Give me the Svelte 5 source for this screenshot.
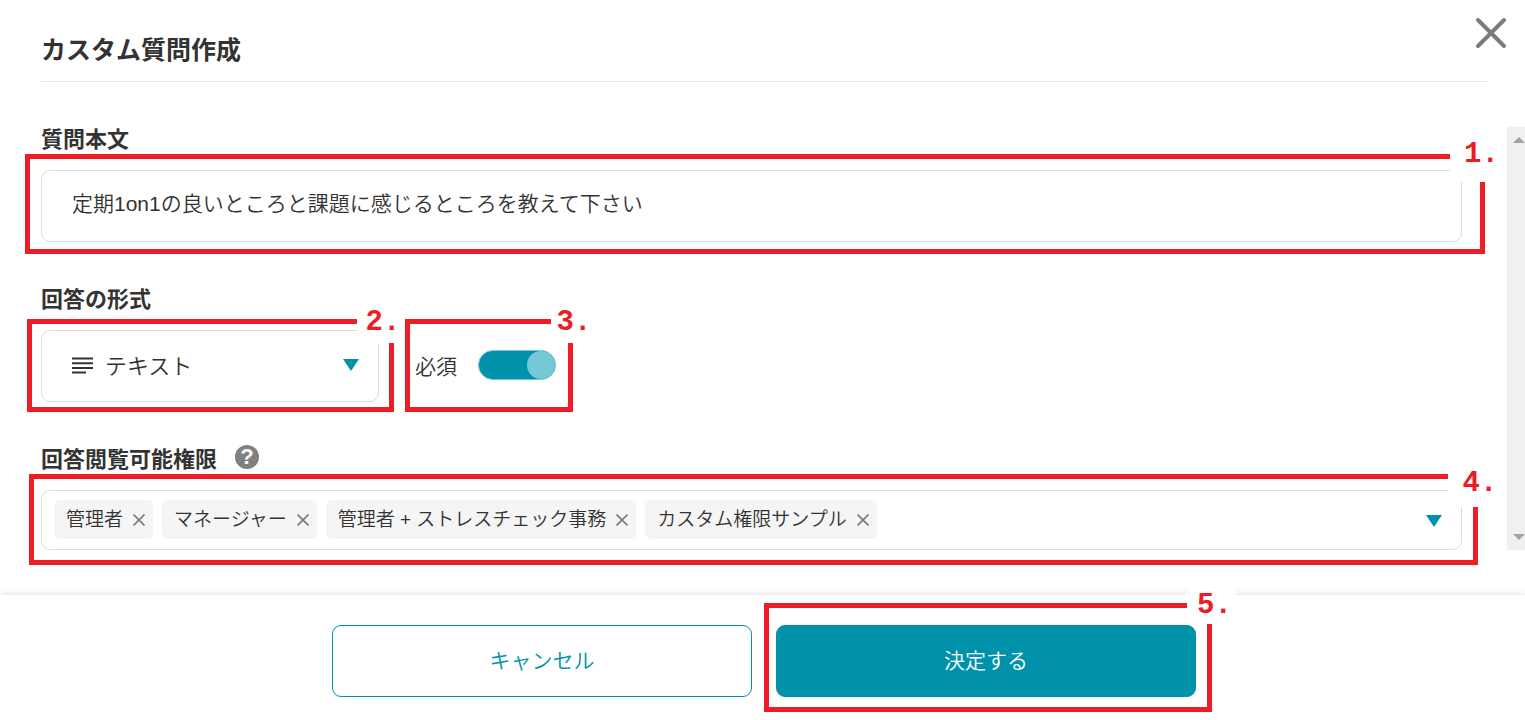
<script lang="ts">

    let question = $state('定期1on1の良いところと課題に感じるところを教えて下さい')
    let format = $state('text')
    let required = $state(true)

    // Roles that can read the answers
    let roles = $state([
        '管理者',
        'マネージャー',
        '管理者 + ストレスチェック事務',
        'カスタム権限サンプル'
    ])

    function removeRole(role) {
        roles = roles.filter((r) => r !== role)
    }

</script>

<!-- Numbered frame around a step -->
{#snippet mark(step)}
    <span class="mark mark-{step}"><b class="mark-number">{step}.</b></span>
{/snippet}

<main class="dialog">

    <header class="header">
        <h1 class="title">カスタム質問作成</h1>
        <button class="close" type="button" aria-label="閉じる">
            <svg viewBox="0 0 32 32" width="32" height="32">
                <path d="M3 3L29 29M29 3L3 29" stroke="#7c7c7c" stroke-width="4" stroke-linecap="round" fill="none" />
            </svg>
        </button>
    </header>

    <div class="body">

        <div class="fields">

            <div class="field">
                <label class="label" for="question">質問本文</label>
                <div class="control">
                    <input id="question" class="box question" type="text" bind:value={question}>
                    {@render mark(1)}
                </div>
            </div>

            <div class="field">
                <label class="label" for="format">回答の形式</label>
                <div class="row">
                    <div class="control format">
                        <select id="format" class="box select" bind:value={format}>
                            <option value="text">テキスト</option>
                        </select>
                        <svg class="lines" viewBox="0 0 21 17" width="21" height="17">
                            <path d="M0 1.5H21M0 6.2H21M0 10.9H21M0 15.5H14" stroke="#333" stroke-width="2" />
                        </svg>
                        <svg class="arrow" viewBox="0 0 16 12" width="16" height="12">
                            <path d="M0 0H16L8 12Z" fill="#0092aa" />
                        </svg>
                        {@render mark(2)}
                    </div>
                    <div class="control required">
                        <label for="required">必須</label>
                        <input id="required" class="toggle" type="checkbox" bind:checked={required}>
                        {@render mark(3)}
                    </div>
                </div>
            </div>

            <div class="field">
                <div class="label">
                    <span id="roles-label">回答閲覧可能権限</span>
                    <button class="help" type="button" aria-label="ヘルプ">?</button>
                </div>
                <div class="control">
                    <div class="box roles" role="group" aria-labelledby="roles-label">
                        {#each roles as role}
                            <span class="chip">
                                <span class="chip-text">{role}</span>
                                <button class="remove" type="button" aria-label="{role}を削除" onclick={() => removeRole(role)}>
                                    <svg viewBox="0 0 12 12" width="12" height="12">
                                        <path d="M0.5 0.5L11.5 11.5M11.5 0.5L0.5 11.5" stroke="#7c7c7c" stroke-width="1.6" />
                                    </svg>
                                </button>
                            </span>
                        {/each}
                        <button class="open" type="button" aria-label="権限を選択">
                            <svg viewBox="0 0 16 12" width="16" height="12">
                                <path d="M0 0H16L8 12Z" fill="#0092aa" />
                            </svg>
                        </button>
                    </div>
                    {@render mark(4)}
                </div>
            </div>

        </div>

        <div class="scrollbar">
            <svg viewBox="0 0 12 6" width="12" height="6"><path d="M0 6L6 0L12 6Z" fill="#a3a3a3" /></svg>
            <svg viewBox="0 0 12 6" width="12" height="6"><path d="M0 0L6 6L12 0Z" fill="#a3a3a3" /></svg>
        </div>

    </div>

    <footer class="footer">
        <button class="button cancel" type="button">キャンセル</button>
        <div class="control">
            <button class="button submit" type="button">決定する</button>
            {@render mark(5)}
        </div>
    </footer>

</main>

<style>

    :global(body) {
        background-color: #fff;
    }

    .dialog {
        overflow: hidden;
        color: #333;
        font-family: "Liberation Sans", "Noto Sans CJK JP", sans-serif;
        font-size: 21px;
        font-weight: 350;
    }

    .dialog * {
        box-sizing: border-box;
    }

    button, input, select {
        margin: 0;
        padding: 0;
        border: 0;
        background: none;
        color: inherit;
        font: inherit;
    }

    button {
        cursor: pointer;
    }

    svg {
        display: block;
    }

    .header {
        position: relative;
        margin: 0 38px 45px 41px;
        padding: 32px 0 13px;
        border-bottom: 1px solid #e8e8e8;
    }

    .title {
        margin: 0;
        font-size: 25px;
        line-height: 36px;
        font-weight: bold;
    }

    .close {
        position: absolute;
        top: 17px;
        right: -20px;
    }

    .body {
        display: flex;
        justify-content: space-between;
        margin-bottom: 45px;
    }

    .fields {
        flex: 1;
        display: flex;
        flex-direction: column;
        gap: 45px;
        padding: 0 45px 0 41px;
    }

    .label {
        display: flex;
        align-items: center;
        gap: 18px;
        height: 20px;
        margin-bottom: 23px;
        font-size: 22px;
        font-weight: bold;
    }

    .help {
        width: 24px;
        height: 24px;
        border-radius: 50%;
        background-color: #808080;
        color: white;
        font-size: 22px;
        line-height: 24px;
        font-weight: bold;
    }

    .control {
        position: relative;
    }

    .box {
        width: 100%;
        border: 1px solid #dcdcdc;
        border-radius: 9px;
    }

    .question {
        display: block;
        height: 72px;
        padding: 0 30px 8px;
    }

    .row {
        display: flex;
        gap: 36px;
    }

    .format {
        width: 338px;
    }

    .select {
        display: block;
        height: 72px;
        padding: 0 63px;
        appearance: none;
        font-size: 22px;
    }

    .lines, .arrow {
        position: absolute;
        top: 27px;
        left: 31px;
        pointer-events: none;
    }

    .arrow {
        top: 29px;
        left: auto;
        right: 20px;
    }

    .required {
        display: flex;
        align-items: center;
        gap: 21px;
        padding-bottom: 2px;
    }

    .toggle {
        width: 78px;
        height: 30px;
        padding: 0;
        appearance: none;
        border: 1px solid #76c8d6;
        border-radius: 15px;
        background-color: #ccc;
        cursor: pointer;
    }

    .toggle::before {
        content: "";
        display: block;
        width: 28px;
        height: 28px;
        border-radius: 50%;
        background-color: #76c8d6;
    }

    .toggle:checked {
        background-color: #0092aa;
    }

    .toggle:checked::before {
        margin-left: auto;
    }

    .roles {
        display: flex;
        align-items: center;
        flex-wrap: wrap;
        gap: 9px;
        min-height: 60px;
        padding: 0 19px 1px 12px;
    }

    .chip {
        display: flex;
        align-items: center;
        gap: 10px;
        height: 39px;
        padding: 0 8px 0 12px;
        border-radius: 6px;
        background-color: #f5f5f5;
        font-size: 19px;
    }

    .chip-text {
        padding-bottom: 4px;
    }

    .open {
        margin-left: auto;
        padding-top: 2px;
    }

    .scrollbar {
        display: flex;
        flex-direction: column;
        justify-content: space-between;
        align-items: flex-end;
        width: 18px;
        padding: 10px 0;
        background-color: #f0f0f0;
    }

    .footer {
        display: flex;
        justify-content: center;
        gap: 24px;
        padding: 30px 0 23px 3px;
        box-shadow: 0 0 8px rgba(0, 0, 0, 0.15);
    }

    .button {
        display: block;
        width: 420px;
        height: 72px;
        padding-bottom: 4px;
        border: 1px solid #0092aa;
        border-radius: 9px;
        color: #0092aa;
    }

    .submit {
        background-color: #0092aa;
        color: white;
    }

    /* Step frames */
    .mark {
        position: absolute;
        border: 5px solid #ee1c25;
        pointer-events: none;
    }

    .mark-number {
        position: absolute;
        display: flex;
        align-items: center;
        justify-content: center;
        padding: 3px 0 0 6px;
        background-color: white;
        color: #ee1c25;
        font-family: "Liberation Mono", monospace;
        font-size: 29px;
        line-height: 32px;
        font-weight: bold;
    }

    .mark-1 {
        inset: -16px -23px -12px -16px;
    }

    .mark-1 .mark-number {
        top: -34px;
        right: -27px;
        width: 57px;
        height: 57px;
    }

    .mark-2 {
        inset: -11px -15px -10px -14px;
    }

    .mark-2 .mark-number {
        top: -25px;
        right: -14px;
        width: 46px;
        height: 44px;
    }

    .mark-3 {
        inset: -11px -17px -10px -10px;
    }

    .mark-3 .mark-number {
        top: -25px;
        right: -23px;
        width: 40px;
        height: 44px;
    }

    .mark-4 {
        inset: -16px -16px -15px -12px;
    }

    .mark-4 .mark-number {
        top: -22px;
        right: -33px;
        width: 58px;
        height: 50px;
    }

    .mark-5 {
        inset: -22px -16px -15px -12px;
    }

    .mark-5 .mark-number {
        top: -24px;
        right: -29px;
        width: 49px;
        height: 40px;
    }

</style>
